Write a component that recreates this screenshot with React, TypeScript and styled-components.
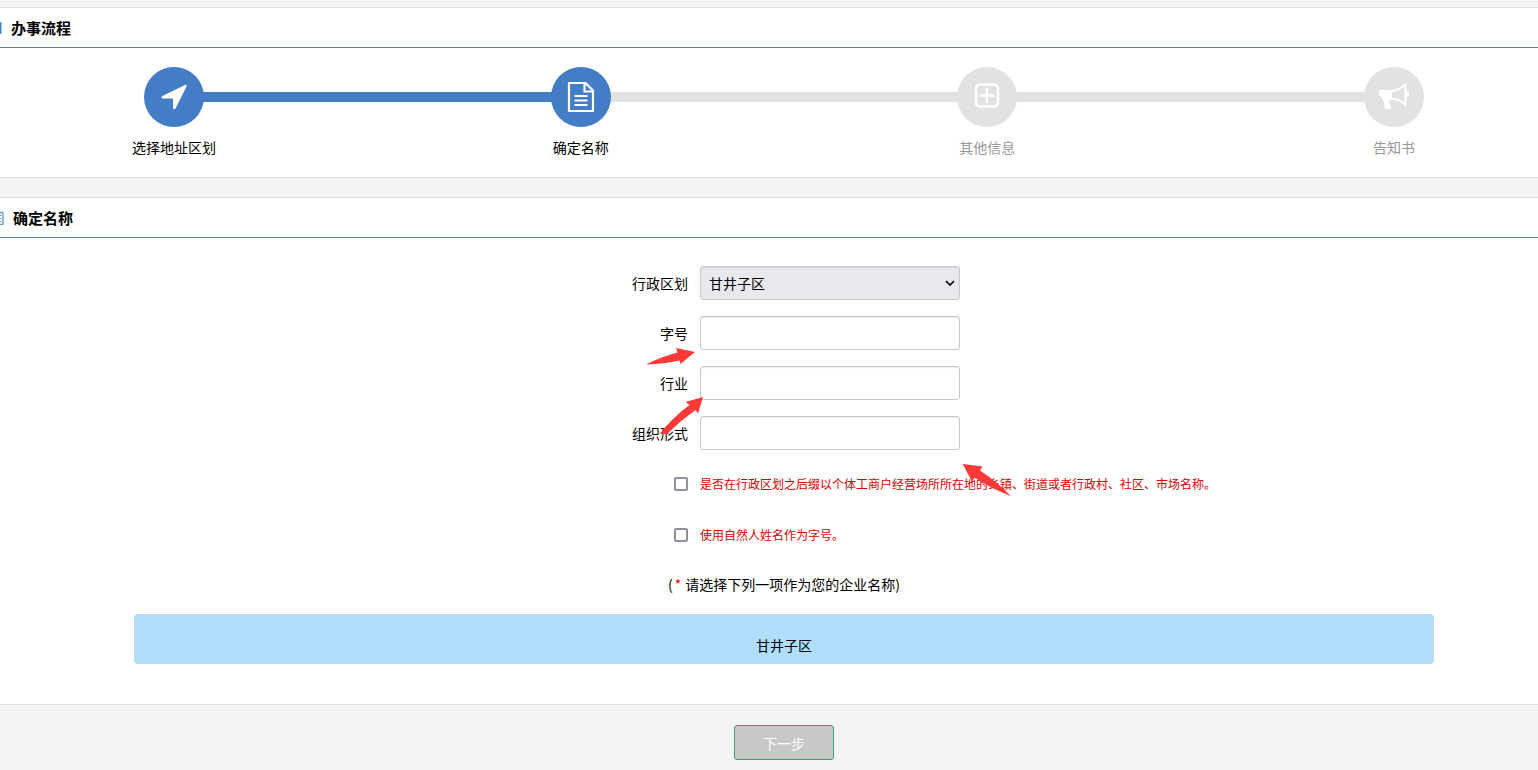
import React from "react";
import styled, { createGlobalStyle } from "styled-components";

const GlobalStyle = createGlobalStyle`
  * { box-sizing: border-box; }
  body {
    margin: 0;
    background: #f3f4f6;
    color: #000;
    font: 14px/20px "Noto Sans CJK SC", sans-serif;
  }
  button, input, select { font: inherit; }
`;

const Page = styled.main`
  display: flex;
  flex-direction: column;
  gap: 19px;
  padding-top: 7px;
  overflow-x: hidden;
`;

const Card = styled.section`
  background: #fff;
  border-top: 1px solid #dfe0e2;
  border-bottom: 1px solid #dfe0e2;
`;

const CardHeader = styled.header`
  display: flex;
  align-items: center;
  height: 40px;
  border-bottom: 1px solid #5f7fa0;
`;

const HeaderIcon = styled.svg<{ $gap: number }>`
  flex: none;
  width: 12px;
  height: 14px;
  margin-left: -8px;
  margin-right: ${(p) => p.$gap}px;
`;

const Title = styled.h2`
  margin: 0;
  font-size: 15px;
  line-height: 20px;
  font-weight: 700;
`;

const CardBody = styled.div<{ $bottom: number }>`
  padding: 19px 0 ${(p) => p.$bottom}px 30px;
`;

const Steps = styled.ol`
  display: flex;
  list-style: none;
  width: 85%;
  max-width: 1280px;
  margin: 0 auto;
  padding: 0;
`;

const Step = styled.li<{ $active: boolean }>`
  position: relative;
  z-index: 1;
  display: flex;
  flex: none;
  flex-direction: column;
  align-items: center;
  gap: 10px;
  width: 60px;
  white-space: nowrap;
  color: ${(p) => (p.$active ? "#000" : "#999")};
`;

const StepCircle = styled.span<{ $active: boolean }>`
  display: grid;
  place-items: center;
  width: 60px;
  height: 60px;
  border-radius: 50%;
  background: ${(p) => (p.$active ? "#427dc6" : "#e2e2e2")};
`;

const Connector = styled.li<{ $active: boolean }>`
  flex: 1;
  height: 10px;
  margin: 25px -1px 0;
  background: ${(p) => (p.$active ? "#427dc6" : "#e2e2e2")};
`;

const Form = styled.form`
  position: relative;
  display: flex;
  flex-direction: column;
  gap: 16px;
  padding-top: 9px;
`;

const Row = styled.div`
  display: grid;
  grid-template-columns: calc(50% - 96px) 1fr;
  column-gap: 12px;
  align-items: center;
  min-height: 34px;
`;

const CheckRow = styled(Row)`
  min-height: 35px;
`;

const FieldLabel = styled.label`
  justify-self: end;
`;

const TextInput = styled.input`
  width: 260px;
  height: 34px;
  padding: 0 8px;
  border: 1px solid #c8c8cc;
  border-radius: 3px;
  background: #fff;
  box-shadow: inset 0 1px 1px rgba(0, 0, 0, 0.07);
`;

const SelectBox = styled.div`
  display: grid;
  grid-template-columns: 260px;
  align-items: center;
`;

const Select = styled.select`
  grid-area: 1 / 1;
  width: 260px;
  height: 34px;
  padding: 0 8px;
  appearance: none;
  border: 1px solid #c8c8cc;
  border-radius: 3px;
  background: #e9e9ed;
  box-shadow: inset 0 1px 1px rgba(0, 0, 0, 0.07);
  color: #000;
`;

const Chevron = styled.svg`
  grid-area: 1 / 1;
  justify-self: end;
  width: 10px;
  height: 8px;
  margin-right: 5px;
  pointer-events: none;
`;

const Checkbox = styled.input`
  justify-self: end;
  appearance: none;
  width: 14px;
  height: 14px;
  margin: 0;
  border: 2px solid #8f8f9d;
  border-radius: 2px;
  background: #fff;
`;

const CheckLabel = styled.label`
  font-size: 12px;
  color: #e00000;
`;

const Hint = styled.p`
  margin: 6px 0 0;
  text-align: center;

  span {
    padding: 0 1px 0 2px;
    color: #f00000;
  }
`;

const NameOption = styled.button`
  width: 87%;
  max-width: 1300px;
  height: 50px;
  margin: 4px auto 0;
  padding: 12px 0 0;
  border: 1px solid #c9d8e2;
  border-radius: 4px;
  background: #b0deff;
  color: #000;
`;

const Markers = styled.svg`
  position: absolute;
  top: 80px;
  left: calc(50% - 144px);
  width: 380px;
  height: 170px;
  pointer-events: none;
`;

const Actions = styled.footer`
  display: flex;
  justify-content: center;
  padding: 1px 0 10px 30px;
`;

const NextButton = styled.button`
  width: 100px;
  height: 35px;
  padding: 0;
  border: 1px solid #35a56c;
  border-radius: 3px;
  background: #c8c8c8;
  color: #fff;
`;

const LocationIcon = () => (
  <svg width="30" height="30" viewBox="0 0 30 30" fill="#fff">
    <path d="M26 3.100c1.300-.7 2 .1 1.500 1.300L16.500 26.600c-.7 1.200-2.500.9-2.500-.6V16.500H4c-1.700 0-2-1.900-.6-2.600z" />
  </svg>
);

const DocumentIcon = () => (
  <svg width="28" height="32" viewBox="0 0 28 32" fill="none" stroke="#fff" strokeWidth="2.200">
    <path d="M2 2h16.500L26 9.500V30H2z" strokeLinejoin="round" />
    <path d="M17.500 2v8.500H26" />
    <path d="M7.500 15h13M7.500 19.500h13M7.500 24h13" />
  </svg>
);

const PlusBoxIcon = () => (
  <svg width="26" height="30" viewBox="0 0 26 30" fill="none" stroke="#fff">
    <rect x="2" y="2.500" width="22" height="22" rx="4" strokeWidth="2.500" />
    <path d="M13 6v15M5.500 13.500h15" strokeWidth="2.400" />
  </svg>
);

const MegaphoneIcon = () => (
  <svg width="32" height="30" viewBox="0 0 32 30" fill="#fff">
    <path d="M1 9.500C1 8.500 1.600 8 2.500 8H14v10h-2.500c-.5 0-.8.4-.6 1l2 6.500c.3 1-.3 1.500-1.200 1.500H8.500c-1 0-1.500-.5-1.700-1.500L5.300 18c-1-.2-1.400-.8-1.600-1.700L3 14.500c-1.500-.5-2-1.500-2-2.800z" />
    <path d="M14 9c5-.5 9.500-3 13.500-6.500v20C23.500 19 19 17 14 17" fill="none" stroke="#fff" strokeWidth="2" strokeLinejoin="round" />
    <path d="M28 9.500h1.500c1 0 1.500.8 1.500 2v1.500c0 1-.5 1.700-1.500 1.700H28z" />
  </svg>
);

const ListIcon = ({ gap }: { gap: number }) => (
  <HeaderIcon $gap={gap} viewBox="0 0 12 14" fill="none" stroke="#5b96d8">
    <rect x="0.500" y="1.500" width="10.500" height="12" rx="1" strokeWidth="1.300" />
    <path d="M2.500 4.500h7M2.500 7.500h7M2.500 10.500h7" />
  </HeaderIcon>
);

const BookIcon = ({ gap }: { gap: number }) => (
  <HeaderIcon $gap={gap} viewBox="0 0 12 14">
    <rect x="0" y="1" width="9.500" height="12" rx="1" fill="#3d86cc" />
  </HeaderIcon>
);

const steps = [
  { label: "选择地址区划", icon: <LocationIcon />, active: true, linked: false },
  { label: "确定名称", icon: <DocumentIcon />, active: true, linked: true },
  { label: "其他信息", icon: <PlusBoxIcon />, active: false, linked: false },
  { label: "告知书", icon: <MegaphoneIcon />, active: false, linked: false },
];

const textFields = [
  { id: "trade-name", label: "字号" },
  { id: "industry", label: "行业" },
  { id: "organization", label: "组织形式" },
];

export default function App() {
  return (
    <>
      <GlobalStyle />
      <Page>
        <Card>
          <CardHeader>
            <BookIcon gap={7} />
            <Title>办事流程</Title>
          </CardHeader>
          <CardBody $bottom={20}>
            <Steps>
              {steps.map((s, i) => (
                <React.Fragment key={s.label}>
                  {i > 0 && <Connector $active={s.linked} aria-hidden="true" />}
                  <Step $active={s.active}>
                    <StepCircle $active={s.active}>{s.icon}</StepCircle>
                    {s.label}
                  </Step>
                </React.Fragment>
              ))}
            </Steps>
          </CardBody>
        </Card>

        <Card>
          <CardHeader>
            <ListIcon gap={9} />
            <Title>确定名称</Title>
          </CardHeader>
          <CardBody $bottom={40}>
            <Form id="name-form" onSubmit={(e) => e.preventDefault()}>
              <Row>
                <FieldLabel htmlFor="district">行政区划</FieldLabel>
                <SelectBox>
                  <Select id="district">
                    <option>甘井子区</option>
                  </Select>
                  <Chevron viewBox="0 0 10 8" fill="none" stroke="#000" strokeWidth="1.600">
                    <path d="M1 2l4 4 4-4" />
                  </Chevron>
                </SelectBox>
              </Row>
              {textFields.map((f) => (
                <Row key={f.id}>
                  <FieldLabel htmlFor={f.id}>{f.label}</FieldLabel>
                  <TextInput id={f.id} type="text" />
                </Row>
              ))}
              <CheckRow>
                <Checkbox id="suffix" type="checkbox" />
                <CheckLabel htmlFor="suffix">
                  是否在行政区划之后缀以个体工商户经营场所所在地的乡镇、街道或者行政村、社区、市场名称。
                </CheckLabel>
              </CheckRow>
              <CheckRow>
                <Checkbox id="own-name" type="checkbox" />
                <CheckLabel htmlFor="own-name">使用自然人姓名作为字号。</CheckLabel>
              </CheckRow>
              <Hint>
                (<span>*</span> 请选择下列一项作为您的企业名称)
              </Hint>
              <NameOption type="button">甘井子区</NameOption>
              <Markers viewBox="640 337 380 170" fill="#fb3a37" aria-hidden="true">
                <path d="M647 364Q661 357 677.500 352.500L676 348L695 352L680.500 364L679.500 360.500Q664 364 647 364.500z" />
                <path d="M659.500 434Q673 417 689.500 405L685.500 402L703 397L698 413.500L695.500 410Q680 421 667 434z" />
                <path d="M962.700 464L982.500 466.500L980 470.500Q996 481 1011 496Q992 489 974.700 477.700L972 481.500z" />
              </Markers>
            </Form>
          </CardBody>
        </Card>

        <Actions>
          <NextButton type="submit" form="name-form">下一步</NextButton>
        </Actions>
      </Page>
    </>
  );
}
